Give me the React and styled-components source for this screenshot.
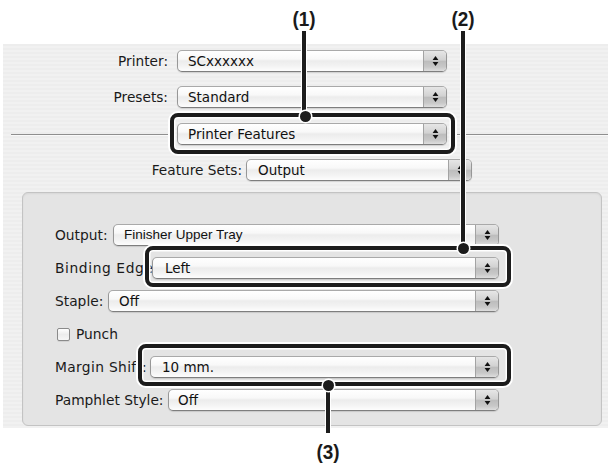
import React from "react";
import styled, { createGlobalStyle } from "styled-components";

const Global = createGlobalStyle`
  html, body { margin: 0; padding: 0; background: #ffffff; }
  body { font-family: "DejaVu Sans", "Liberation Sans", sans-serif; color: #1a1a1a; }
`;

const Page = styled.div`
  position: relative;
  width: 608px;
  height: 472px;
  overflow: hidden;
  padding-top: 44px;
  box-sizing: border-box;
`;

const Window = styled.div`
  margin-left: 3px;
  width: 605px;
  height: 384px;
  box-sizing: border-box;
  padding-top: 6px;
  display: flex;
  flex-direction: column;
  background: repeating-linear-gradient(
    to bottom,
    #ededed 0px,
    #ededed 2px,
    #f1f1f1 2px,
    #f1f1f1 4px
  );
`;

const TopRow = styled.div`
  display: flex;
  align-items: center;
  height: 22px;
  margin-top: ${(p) => p.$mt || 0}px;
`;

const TopLabel = styled.span`
  flex: none;
  width: ${(p) => p.$w}px;
  padding-right: ${(p) => p.$gap}px;
  box-sizing: border-box;
  text-align: right;
  font-size: 13.7px;
  white-space: nowrap;
`;

const SepRow = styled.div`
  display: flex;
  align-items: center;
  height: 22px;
  margin-top: 15px;
  padding-left: 8px;
`;

const Rule = styled.div`
  flex: ${(p) => (p.$w ? "none" : "1")};
  width: ${(p) => (p.$w ? `${p.$w}px` : "auto")};
  height: 1px;
  background: #8f8f8f;
  box-shadow: 0 1px 0 #fafafa;
`;

const Slot = styled.div`
  flex: none;
  width: 285px;
  box-sizing: border-box;
  padding: 0 8px 0 7px;
  display: flex;
`;

const Popup = styled.div`
  display: flex;
  height: 22px;
  box-sizing: border-box;
  flex: ${(p) => (p.$w ? "none" : "1")};
  width: ${(p) => (p.$w ? `${p.$w}px` : "auto")};
  border: 1px solid #979797;
  border-top-color: #a9a9a9;
  border-bottom-color: #7e7e7e;
  border-radius: 5px;
  overflow: hidden;
  background: linear-gradient(
    to bottom,
    #ffffff 0%,
    #f8f8f8 40%,
    #ececec 50%,
    #f3f3f3 75%,
    #fdfdfd 100%
  );
  box-shadow: 0 1px 1px rgba(0, 0, 0, 0.12);
`;

const PopupText = styled.span`
  flex: 1;
  padding-left: ${(p) => p.$pad || 10}px;
  font-size: 13.5px;
  font-family: ${(p) =>
    p.$helv ? '"Liberation Sans", Arial, sans-serif' : "inherit"};
  line-height: 20px;
  white-space: nowrap;
  overflow: hidden;
  color: #111;
`;

const ArrowCell = styled.span`
  flex: none;
  width: 22px;
  display: flex;
  align-items: center;
  justify-content: center;
  border-left: 1px solid #a3a3a3;
  background: linear-gradient(
    to bottom,
    #e6e6e6 0%,
    #d2d2d2 45%,
    #bdbdbd 52%,
    #c8c8c8 80%,
    #dedede 100%
  );
`;

const Arrows = () => (
  <svg width="7" height="12" viewBox="0 0 7 12">
    <polygon points="3.5,1 0.6,5 6.4,5" fill="#111" />
    <polygon points="0.6,7 6.4,7 3.5,11" fill="#111" />
  </svg>
);

const PopupButton = ({ value, w, helv, pad }) => (
  <Popup $w={w}>
    <PopupText $helv={helv} $pad={pad}>
      {value}
    </PopupText>
    <ArrowCell>
      <Arrows />
    </ArrowCell>
  </Popup>
);

const Panel = styled.div`
  margin: 11px 0 0 19px;
  width: 580px;
  height: 234px;
  box-sizing: border-box;
  border: 1px solid #c3c3c3;
  border-radius: 6px;
  background: #e4e4e4;
  box-shadow: inset 0 1px 2px rgba(0, 0, 0, 0.06);
  padding: 31px 0 0 32px;
  display: flex;
  flex-direction: column;
  gap: 11px;
`;

const FieldRow = styled.div`
  display: flex;
  align-items: center;
  height: 22px;
  width: 444px;
`;

const FieldLabel = styled.span`
  flex: none;
  width: ${(p) => p.$w}px;
  overflow: hidden;
  white-space: nowrap;
  font-size: 13.8px;
  letter-spacing: ${(p) => p.$ls || 0}px;
`;

const CheckRow = styled.label`
  display: flex;
  align-items: center;
  height: 22px;
  gap: 6px;
  padding-left: 2px;
  font-size: 13.8px;
`;

const CheckBox = styled.span`
  width: 13px;
  height: 13px;
  box-sizing: border-box;
  border: 1px solid #8a8a8a;
  border-radius: 2px;
  background: linear-gradient(to bottom, #ffffff, #ececec 50%, #f6f6f6);
  box-shadow: 0 1px 0 rgba(0, 0, 0, 0.08);
`;

/* ---------- callout overlay ---------- */

const CalloutBox = styled.div`
  position: absolute;
  left: ${(p) => p.$x}px;
  top: ${(p) => p.$y}px;
  width: ${(p) => p.$w}px;
  height: ${(p) => p.$h}px;
  box-sizing: border-box;
  border: 4px solid #1c1c1c;
  border-radius: 8px;
  box-shadow: 0 0 0 2px #ffffff, inset 0 0 0 1.5px #ffffff;
`;

const Leader = styled.div`
  position: absolute;
  left: ${(p) => p.$x - 2}px;
  top: ${(p) => p.$y1}px;
  width: 4px;
  height: ${(p) => p.$y2 - p.$y1}px;
  background: #1c1c1c;
  box-shadow: 0 0 0 1px #ffffff;
`;

const Dot = styled.div`
  position: absolute;
  left: ${(p) => p.$x - 5.5}px;
  top: ${(p) => p.$y - 5.5}px;
  width: 11px;
  height: 11px;
  border-radius: 50%;
  background: #1c1c1c;
  box-shadow: 0 0 0 1.5px #ffffff;
`;

const Tag = styled.div`
  position: absolute;
  left: ${(p) => p.$x}px;
  top: ${(p) => p.$y}px;
  transform: translateX(-50%) scaleX(0.9);
  font-family: "Liberation Sans", Arial, sans-serif;
  font-weight: bold;
  font-size: 21px;
  line-height: 22px;
  color: #1a1a1a;
  white-space: nowrap;
`;

export default function App() {
  return (
    <>
      <Global />
      <Page>
        <Window>
          <TopRow>
            <TopLabel $w={174} $gap={9}>
              Printer:
            </TopLabel>
            <PopupButton value="SCxxxxxx" w={270} />
          </TopRow>
          <TopRow $mt={14}>
            <TopLabel $w={174} $gap={9}>
              Presets:
            </TopLabel>
            <PopupButton value="Standard" w={270} />
          </TopRow>
          <SepRow>
            <Rule $w={159} />
            <Slot>
              <PopupButton value="Printer Features" />
            </Slot>
            <Rule />
          </SepRow>
          <TopRow $mt={14}>
            <TopLabel $w={243} $gap={4}>
              Feature Sets:
            </TopLabel>
            <PopupButton value="Output" w={226} pad={11} />
          </TopRow>

          <Panel>
            <FieldRow>
              <FieldLabel $w={58}>Output:</FieldLabel>
              <PopupButton value="Finisher Upper Tray" helv />
            </FieldRow>
            <FieldRow>
              <FieldLabel $w={97} $ls={0.6}>
                Binding Edge:
              </FieldLabel>
              <PopupButton value="Left" pad={12} />
            </FieldRow>
            <FieldRow>
              <FieldLabel $w={53}>Staple:</FieldLabel>
              <PopupButton value="Off" />
            </FieldRow>
            <CheckRow>
              <CheckBox />
              Punch
            </CheckRow>
            <FieldRow>
              <FieldLabel $w={95} $ls={0.35}>
                Margin Shift:
              </FieldLabel>
              <PopupButton value="10 mm." pad={11} />
            </FieldRow>
            <FieldRow>
              <FieldLabel $w={113}>Pamphlet Style:</FieldLabel>
              <PopupButton value="Off" pad={9} />
            </FieldRow>
          </Panel>
        </Window>

        <CalloutBox $x={170} $y={113} $w={285} $h={41} />
        <CalloutBox $x={145} $y={246} $w={366} $h={41} />
        <CalloutBox $x={138} $y={344} $w={373} $h={42} />

        <Leader $x={304} $y1={31} $y2={116} />
        <Leader $x={463} $y1={31} $y2={248} />
        <Leader $x={328} $y1={384} $y2={433} />

        <Dot $x={305} $y={116} />
        <Dot $x={463} $y={248} />
        <Dot $x={328} $y={385} />

        <Tag $x={304} $y={8}>(1)</Tag>
        <Tag $x={463} $y={8}>(2)</Tag>
        <Tag $x={328} $y={441}>(3)</Tag>
      </Page>
    </>
  );
}
